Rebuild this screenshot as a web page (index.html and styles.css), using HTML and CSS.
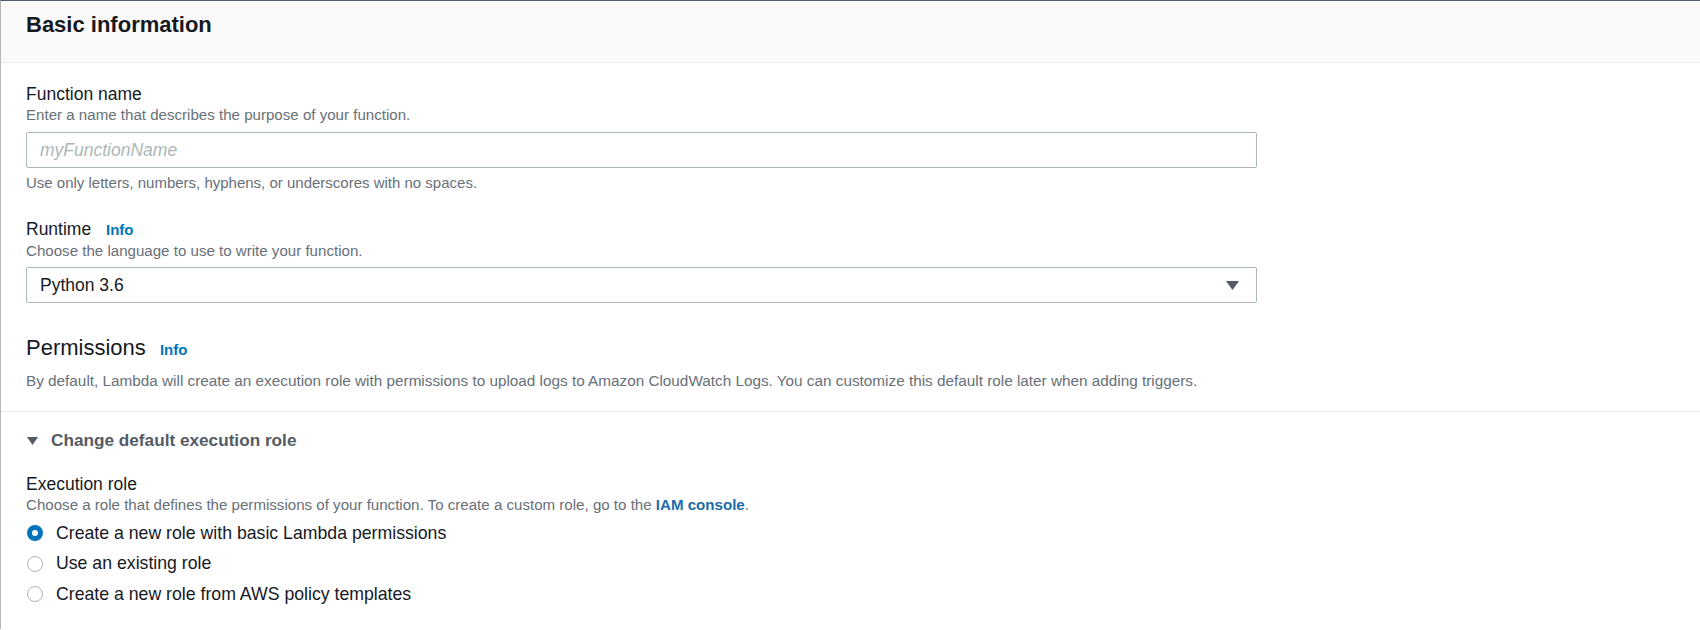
FILE: index.html
```html
<!DOCTYPE html>
<html lang="en">
<head>
<meta charset="utf-8">
<title>Basic information</title>
<link rel="stylesheet" href="styles.css">
</head>
<body>
<div class="panel">
  <div class="panel-header">
    <h2 class="panel-title">Basic information</h2>
  </div>
  <div class="panel-body">
    <div class="field">
      <div class="label">Function name</div>
      <div class="desc">Enter a name that describes the purpose of your function.</div>
      <input class="text-input" type="text" placeholder="myFunctionName">
      <div class="hint">Use only letters, numbers, hyphens, or underscores with no spaces.</div>
    </div>
    <div class="field runtime">
      <div class="label">Runtime <a class="info">Info</a></div>
      <div class="desc">Choose the language to use to write your function.</div>
      <div class="select">
        <span class="select-value">Python 3.6</span>
        <svg class="select-caret" width="13" height="9" viewBox="0 0 13 9"><path d="M0 0 H13 L6.5 9 Z" fill="#545b64"/></svg>
      </div>
    </div>
    <div class="perm">
      <h3 class="perm-title">Permissions <a class="info">Info</a></h3>
      <p class="desc perm-desc">By default, Lambda will create an execution role with permissions to upload logs to Amazon CloudWatch Logs. You can customize this default role later when adding triggers.</p>
    </div>
  </div>
  <div class="expander">
    <div class="exp-head">
      <svg class="exp-caret" width="11" height="8" viewBox="0 0 11 8"><path d="M0 0 H11 L5.5 8 Z" fill="#545b64"/></svg>
      <span>Change default execution role</span>
    </div>
    <div class="field role">
      <div class="label">Execution role</div>
      <div class="desc">Choose a role that defines the permissions of your function. To create a custom role, go to the <a class="link">IAM console</a>.</div>
      <div class="radios">
        <label class="radio-row"><span class="radio checked"></span>Create a new role with basic Lambda permissions</label>
        <label class="radio-row"><span class="radio"></span>Use an existing role</label>
        <label class="radio-row"><span class="radio"></span>Create a new role from AWS policy templates</label>
      </div>
    </div>
  </div>
</div>
</body>
</html>
```

FILE: styles.css
```css
* { box-sizing: border-box; }
html, body { margin: 0; padding: 0; background: #fff; }
body {
  font-family: "Liberation Sans", Arial, sans-serif;
  color: #16191f;
  height: 630px;
  overflow: hidden;
}
.panel {
  border-top: 1px solid #545b64;
  border-left: 1px solid #b4b8b8;
  min-height: 629px;
}
.panel-header {
  height: 62px;
  background: #fafafa;
  border-bottom: 1px solid #eaeded;
  padding: 10px 25px 0;
}
.panel-title {
  margin: 0;
  font-size: 22px;
  line-height: 28px;
  font-weight: 700;
  color: #16191f;
}
.panel-body {
  padding: 20px 25px 20px;
  display: flex;
  flex-direction: column;
}
.field { display: flex; flex-direction: column; }
.label {
  font-size: 17.5px;
  line-height: 22px;
  color: #16191f;
}
.desc {
  margin: 0;
  font-size: 15.1px;
  line-height: 20px;
  color: #687078;
}
.perm-desc { font-size: 15.3px; }
.info, .link {
  color: #0073bb;
  font-weight: 700;
  font-size: 15px;
  text-decoration: none;
}
.info { margin-left: 10px; }
.link { font-size: 15.1px; color: #1a6ca8; }
.text-input {
  margin-top: 7px;
  width: 1231px;
  height: 36px;
  border: 1px solid #aab7b8;
  border-radius: 2px;
  padding: 0 13px;
  font-family: "Liberation Sans", Arial, sans-serif;
  font-size: 17.5px;
  color: #16191f;
  outline: none;
}
.text-input::placeholder { color: #aab7b8; font-style: italic; }
.hint {
  margin-top: 5px;
  font-size: 15px;
  line-height: 20px;
  color: #687078;
}
.runtime { margin-top: 25px; }
.select {
  margin-top: 6px;
  width: 1231px;
  height: 36px;
  border: 1px solid #aab7b8;
  border-radius: 2px;
  padding: 0 17px 0 13px;
  display: flex;
  align-items: center;
  justify-content: space-between;
  font-size: 17.5px;
  color: #16191f;
}
.select-caret { display: block; }
.perm { margin-top: 31px; }
.perm-title {
  margin: 0 0 7px;
  font-size: 22px;
  line-height: 28px;
  font-weight: 400;
  color: #16191f;
}
.perm-title .info { margin-left: 8px; }
.expander {
  border-top: 1px solid #eaeded;
  padding: 17px 25px 0;
}
.exp-head {
  display: flex;
  align-items: center;
  gap: 13px;
  font-size: 17.2px;
  line-height: 22px;
  font-weight: 700;
  color: #545b64;
  padding-left: 1px;
}
.exp-caret { display: block; margin-top: 1px; }
.role { margin-top: 22px; }
.radios {
  margin-top: 3px;
  display: flex;
  flex-direction: column;
}
.radio-row {
  display: flex;
  align-items: center;
  height: 30.5px;
  font-size: 17.7px;
  color: #16191f;
}
.radio {
  width: 16px;
  height: 16px;
  border-radius: 50%;
  border: 1.5px solid #aab7b8;
  margin: 0 13px 0 1px;
  flex: none;
  background: #fff;
}
.radio.checked {
  border: 5px solid #0073bb;
}
```
